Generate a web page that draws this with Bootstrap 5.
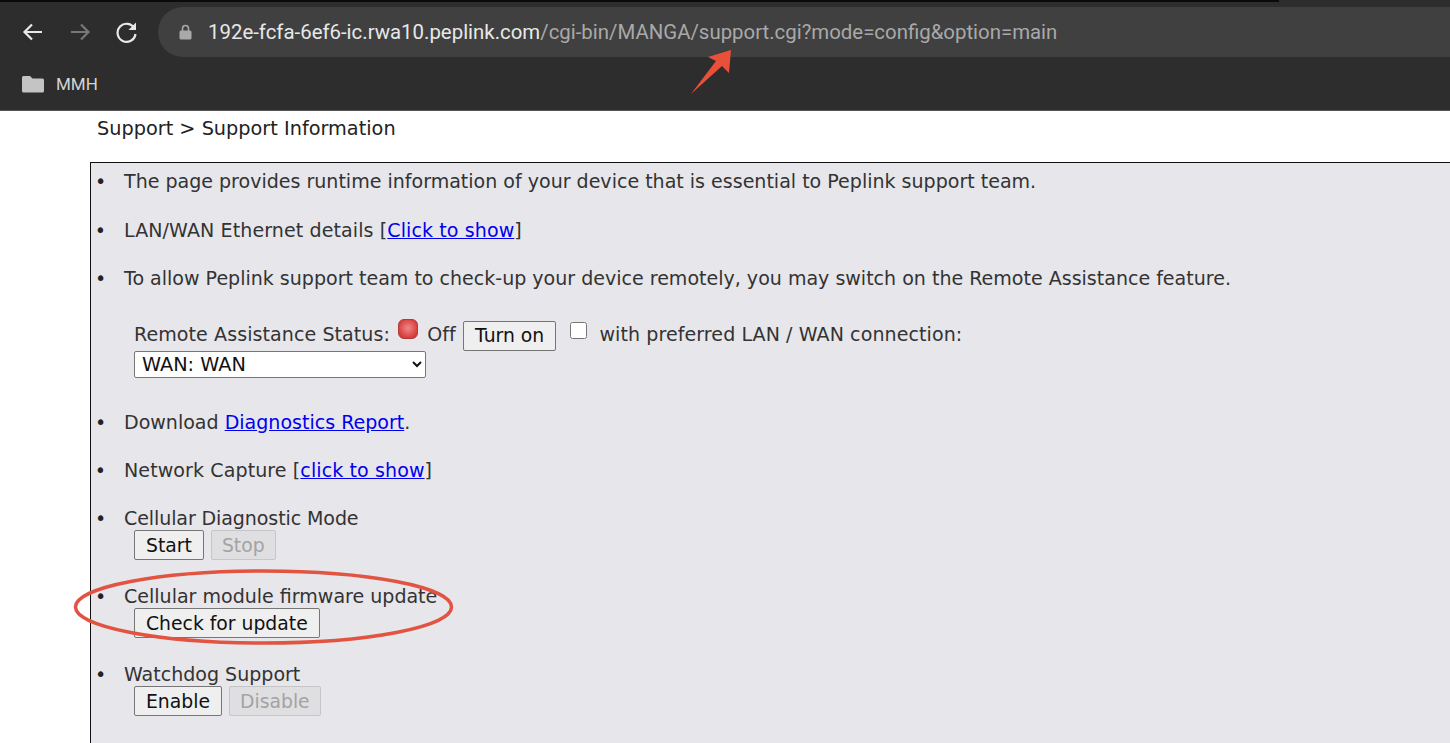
<!DOCTYPE html>
<html>
<head>
    <title>Support Information</title>
    <link href="https://cdn.jsdelivr.net/npm/bootstrap@5.3.0/dist/css/bootstrap.min.css" rel="stylesheet">
    <style>
        html, body {
            height: 743px;
            overflow: hidden;
        }

        body {
            background-color: #fff;
            font-family: "DejaVu Sans", sans-serif;
            font-size: 19.05px;
            line-height: 22px;
            color: #333;
            position: relative;
        }

        .browser-top {
            height: 111px;
            background-color: #2d2d2d;
            border-bottom: 1px solid #555;
            font-family: Roboto, sans-serif;
        }

        .top-strip {
            width: 1279px;
            height: 2px;
            background-color: #0a0a0a;
        }

        .tool-row {
            height: 59px;
            padding: 1px 0 0 21px;
        }

        .tool-icon {
            width: 24px;
            height: 24px;
            margin-right: 23px;
            flex: none;
        }

        .url-pill {
            flex: 1;
            height: 50px;
            margin-left: -4px;
            margin-right: -40px;
            padding-left: 21px;
            background-color: #404040;
            border-radius: 25px;
            font-size: 20.4px;
            color: #a9a9a9;
            white-space: nowrap;
        }

        .url-host {
            color: #e8e8e8;
        }

        .mark-row {
            height: 49px;
            padding: 0 0 3px 22px;
            font-size: 17px;
            color: #d4d4d4;
        }

        .mark-row svg {
            margin-right: 12px;
        }

        .crumb-line {
            padding: 7px 0 0 97px;
            height: 51px;
            font-size: 19.3px;
            color: #222;
        }

        .info-box {
            margin-left: 90px;
            width: 1400px;
            height: 640px;
            background-color: #e6e6eb;
            border: 1px solid #111;
        }

        .info-list {
            margin: 0;
            padding: 7px 0 0 33px;
        }

        .info-list > li {
            margin-bottom: 26px;
        }

        .info-list > li:first-child {
            margin-bottom: 27px;
        }

        .info-list > li::marker {
            content: "•\2002\2004\200A";
            color: #222;
        }

        .info-list a {
            color: #0000ee;
        }

        .wide-line {
            letter-spacing: .1px;
        }

        .tight-line {
            letter-spacing: -.1px;
        }

        .assist-block {
            padding: 30px 0 7px 10px;
            letter-spacing: .08px;
        }

        .old-btn {
            display: inline-block;
            font-family: inherit;
            font-size: 18.8px;
            line-height: 22px;
            height: 30px;
            padding: 2px 11px 0;
            color: #111;
            background-color: #efefef;
            border: 1px solid #767676;
            border-radius: 2px;
        }

        .old-btn:disabled {
            padding: 2px 10px 0;
            color: #a3a3a3;
            background-color: #dfdfe2;
            border-color: #c6c6c8;
        }

        .btn-pair {
            display: flex;
            gap: 7px;
            padding: 1px 0 0 10px;
            margin-bottom: -1px;
        }

        .led-dot {
            display: inline-block;
            width: 20px;
            height: 20px;
            margin: 0 3px 0 2px;
            border-radius: 6px;
            background: radial-gradient(circle at 50% 45%, #ee8a8a, #d83a3a 75%);
            border: 1px solid #b03a3a;
            vertical-align: 2px;
        }

        .status-btn {
            margin-left: 1px;
            padding-top: 1px;
            vertical-align: -1px;
        }

        .plain-check {
            width: 17px;
            height: 17px;
            margin: 0 6px 0 8px;
            vertical-align: 2px;
            appearance: auto;
        }

        .wan-select {
            display: block;
            width: 292px;
            height: 27px;
            padding: 0 0 0 3px;
            font-family: inherit;
            font-size: 19.3px;
            color: #111;
            background-color: #fff;
            border: 1px solid #767676;
            border-radius: 2px;
        }

        .note-layer {
            position: absolute;
            left: 0;
            top: 0;
            pointer-events: none;
        }
    </style>
</head>
<body>
<div class="browser-top">
    <div class="top-strip"></div>
    <div class="tool-row d-flex align-items-center">
        <svg class="tool-icon" viewBox="0 0 24 24" fill="none" stroke="#e8e8e8" stroke-width="2.2"><path d="M21 12H4M11 4.5 3.5 12l7.5 7.500"/></svg>
        <svg class="tool-icon" viewBox="0 0 24 24" fill="none" stroke="#777" stroke-width="2.200"><path d="M3 12h17M13 4.500l7.500 7.500-7.500 7.500"/></svg>
        <svg class="tool-icon" viewBox="0 0 24 24" fill="none" stroke="#e8e8e8" stroke-width="2.200"><path d="M19.500 8.500A9 9 0 1 0 20.500 14"/><path d="M21 2.500V10h-7.500z" fill="#e8e8e8" stroke="none"/></svg>
        <div class="url-pill d-flex align-items-center">
            <svg width="13" height="16" viewBox="0 0 13 16" class="me-3 flex-shrink-0"><path d="M3.500 7V4.500a3 3 0 0 1 6 0V7" fill="none" stroke="#a9a9a9" stroke-width="1.600"/><rect x="0.500" y="6.500" width="12" height="9" rx="1.500" fill="#a9a9a9"/></svg>
            <span><span class="url-host">192e-fcfa-6ef6-ic.rwa10.peplink.com</span>/cgi-bin/MANGA/support.cgi?mode=config&amp;option=main</span>
        </div>
    </div>
    <div class="mark-row d-flex align-items-center">
        <svg width="22" height="18" viewBox="0 0 22 18"><path d="M0 2.500A1.500 1.500 0 0 1 1.500 1H8l2.500 2.500h10A1.500 1.500 0 0 1 22 5v11a1.500 1.500 0 0 1-1.500 1.500h-19A1.500 1.500 0 0 1 0 16z" fill="#c4c4c4"/></svg>
        <span>MMH</span>
    </div>
</div>

<div class="crumb-line">Support &gt; Support Information</div>

<div class="info-box">
    <ul class="info-list">
        <li>The page provides runtime information of your device that is essential to Peplink support team.</li>
        <li class="wide-line">LAN/WAN Ethernet details [<a href="#">Click to show</a>]</li>
        <li>
            To allow Peplink support team to check-up your device remotely, you may switch on the Remote Assistance feature.
            <div class="assist-block">
                Remote Assistance Status: <span class="led-dot"></span> Off <button class="old-btn status-btn" type="button">Turn on</button>
                <input class="plain-check" type="checkbox"> with preferred LAN / WAN connection:
                <select class="wan-select"><option>WAN: WAN</option></select>
            </div>
        </li>
        <li>Download <a href="#">Diagnostics Report</a>.</li>
        <li class="wide-line">Network Capture [<a href="#">click to show</a>]</li>
        <li>
            <span class="tight-line">Cellular Diagnostic Mode</span>
            <div class="btn-pair">
                <button class="old-btn" type="button">Start</button>
                <button class="old-btn" type="button" disabled>Stop</button>
            </div>
        </li>
        <li>
            Cellular module firmware update
            <div class="btn-pair">
                <button class="old-btn" type="button">Check for update</button>
            </div>
        </li>
        <li>
            Watchdog Support
            <div class="btn-pair">
                <button class="old-btn" type="button">Enable</button>
                <button class="old-btn" type="button" disabled>Disable</button>
            </div>
        </li>
    </ul>
</div>

<!-- red annotations drawn on top of the screenshot -->
<svg class="note-layer" width="1450" height="743" viewBox="0 0 1450 743">
    <path d="M691 94 716 61 708 57 731 50 729 73 722 66z" fill="#e8503a"/>
    <ellipse cx="263.500" cy="607" rx="188" ry="36" fill="none" stroke="#e25441" stroke-width="3.500"/>
</svg>
<script src="https://cdn.jsdelivr.net/npm/bootstrap@5.3.0/dist/js/bootstrap.bundle.min.js"></script>
</body>
</html>
